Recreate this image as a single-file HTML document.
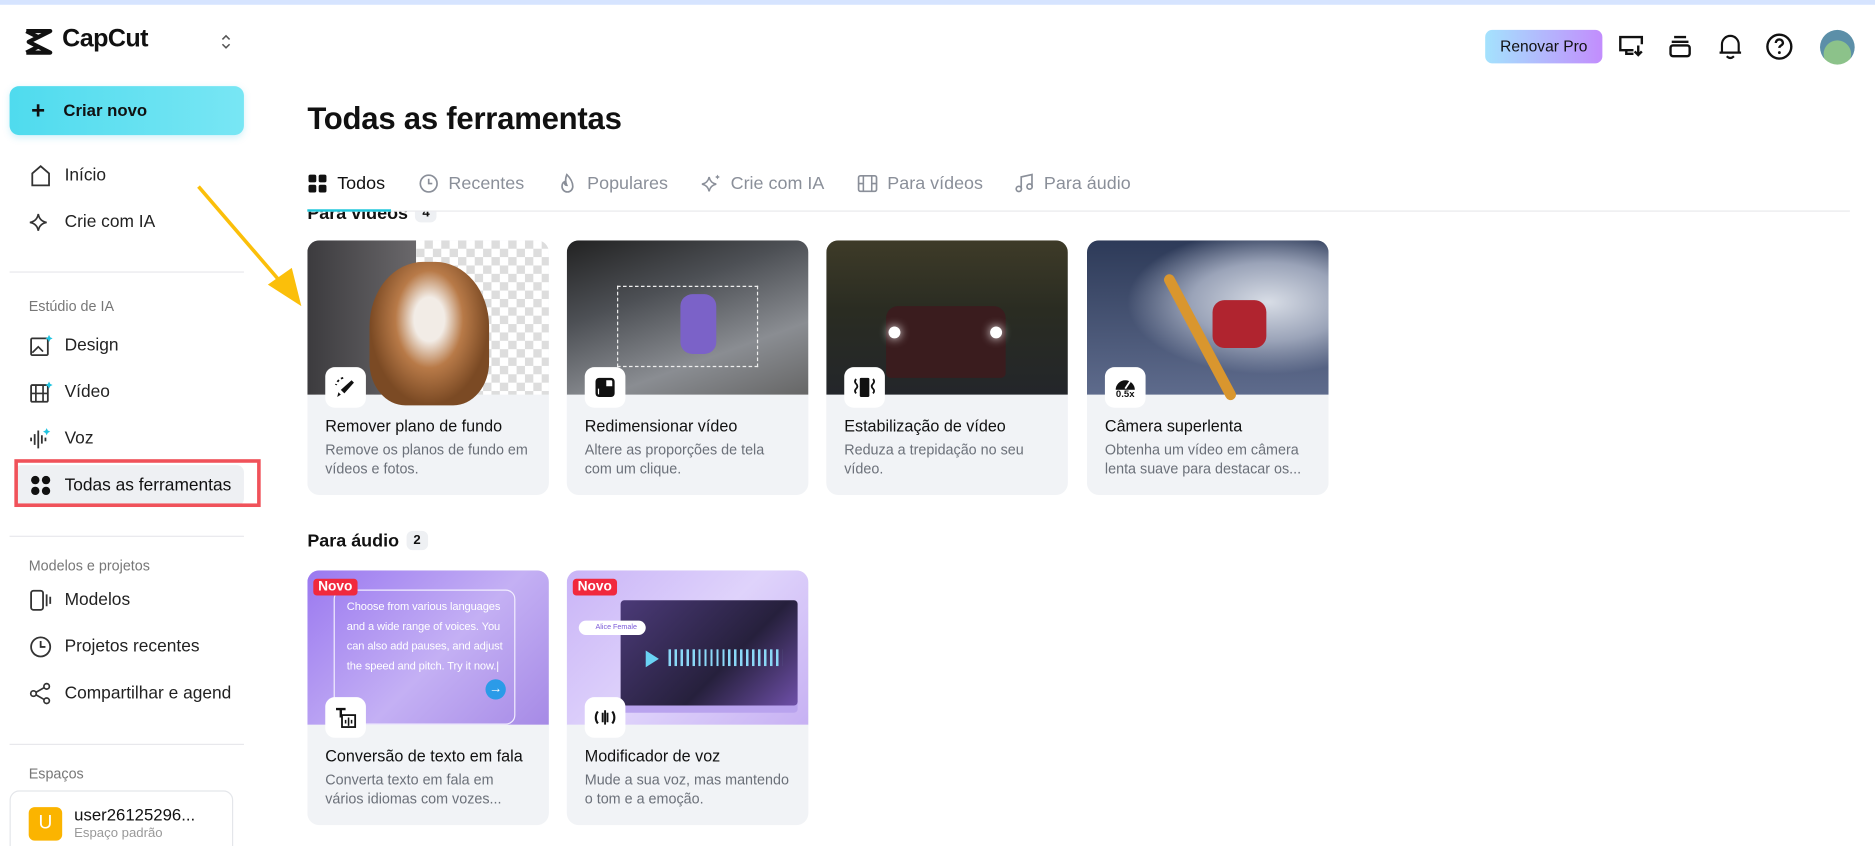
<!DOCTYPE html>
<html><head><meta charset="utf-8"><style>
*{box-sizing:border-box;margin:0;padding:0}
html,body{width:1875px;height:846px;overflow:hidden;background:#fff}
#w{width:1568px;height:708px;transform:scale(1.1958);transform-origin:0 0;position:relative;font-family:"Liberation Sans",sans-serif;color:#111}
.a{position:absolute}
.nav{position:absolute;left:24px;font-size:14.5px;color:#222;display:flex;align-items:center;gap:10px}
.nav svg{width:20px;height:20px}
.sec{position:absolute;left:24px;font-size:12px;color:#777}
.div{position:absolute;left:8px;width:196px;height:1px;background:#e8e8ec}
.tab{position:absolute;top:145px;font-size:15px;color:#8a8f99;display:flex;align-items:center;gap:8px}
.tab svg{width:17px;height:17px}
.card{position:absolute;width:202px;height:213px;background:#f1f3f6;border-radius:10px;overflow:hidden}
.img{position:absolute;left:0;top:0;width:202px;height:129px}
.ic{position:absolute;left:15px;top:106px;width:34px;height:34px;background:#fff;border-radius:8px;display:flex;align-items:center;justify-content:center}
.t{position:absolute;left:15px;top:148px;font-size:13.5px;color:#111}
.d{position:absolute;left:15px;top:168px;font-size:12px;color:#6b7079;line-height:15.5px;width:172px}
.badge{display:inline-block;background:#eef0f3;border-radius:5px;font-size:11px;padding:2px 6px;margin-left:6px;vertical-align:2px;font-weight:bold}
.novo{position:absolute;left:5px;top:7px;background:#f1293d;color:#fff;font-size:11.5px;font-weight:bold;padding:1px 4px;border-radius:3px}
</style></head><body><div id="w">
<div class="a" style="left:0;top:0;width:1568px;height:4px;background:#d6e4ff"></div>
<svg class="a" style="left:20px;top:24px" width="26" height="22" viewBox="0 0 26 22"><path d="M2 2h20l-18 9 18 9H2M2 2l10 5M2 20l10-5" fill="none" stroke="#111" stroke-width="3.5" stroke-linejoin="round"/></svg>
<div class="a" style="left:52px;top:21px;font-size:21px;font-weight:bold;color:#111;letter-spacing:-.5px">CapCut</div>
<svg class="a" style="left:184px;top:27px" width="10" height="16" viewBox="0 0 10 16"><path d="M2 6l3-3 3 3M2 10l3 3 3-3" fill="none" stroke="#555" stroke-width="1.3"/></svg>
<div class="a" style="left:8px;top:72px;width:196px;height:41px;border-radius:8px;background:linear-gradient(90deg,#4fdbee,#78e6f4);box-shadow:0 2px 6px rgba(80,200,230,.25)"></div>
<div class="a" style="left:26px;top:82px;font-size:20px;font-weight:bold">+</div>
<div class="a" style="left:53px;top:84px;font-size:14px;font-weight:bold">Criar novo</div>
<div class="nav" style="top:137px"><svg viewBox="0 0 20 20"><path d="M3 18V8l7-6 7 6v10z" fill="none" stroke="#333" stroke-width="1.5"/></svg>Início</div>
<div class="nav" style="top:176px"><svg viewBox="0 0 20 20"><path d="M8 3q1 6 7 7-6 1-7 7-1-6-7-7 6-1 7-7z" fill="none" stroke="#333" stroke-width="1.4"/></svg>Crie com IA</div>
<div class="div" style="top:227px"></div>
<div class="sec" style="top:249px">Estúdio de IA</div>
<div class="nav" style="top:279px"><svg viewBox="0 0 20 20"><rect x="2" y="4" width="14" height="14" rx="1" fill="none" stroke="#333" stroke-width="1.5"/><path d="M3 16l5-5 4 4" fill="none" stroke="#333" stroke-width="1.4"/><path d="M17 1l1 2 2 1-2 1-1 2-1-2-2-1 2-1z" fill="#20c4e0"/></svg>Design</div>
<div class="nav" style="top:318px"><svg viewBox="0 0 20 20"><rect x="2" y="4" width="14" height="14" rx="1" fill="none" stroke="#333" stroke-width="1.5"/><path d="M6 4v14M12 4v14M2 11h14" stroke="#333" stroke-width="1.4"/><path d="M17 1l1 2 2 1-2 1-1 2-1-2-2-1 2-1z" fill="#20c4e0"/></svg>Vídeo</div>
<div class="nav" style="top:357px"><svg viewBox="0 0 20 20"><path d="M2 9v3M5 6v9M8 3v15M11 7v7M14 9v3" stroke="#333" stroke-width="1.5"/><path d="M15 1l1 2 2 1-2 1-1 2-1-2-2-1 2-1z" fill="#20c4e0"/></svg>Voz</div>
<div class="a" style="left:12px;top:389px;width:192px;height:34px;background:#eef0f3;border-radius:6px"></div>
<div class="a" style="left:12px;top:384px;width:206px;height:40px;border:3px solid #f0525a"></div>
<div class="nav" style="top:396px;color:#111"><svg viewBox="0 0 20 20"><circle cx="5.5" cy="5.5" r="3.5" fill="#111"/><circle cx="14.5" cy="5.5" r="3.5" fill="#111"/><circle cx="5.5" cy="14.5" r="3.5" fill="#111"/><circle cx="14.5" cy="14.5" r="3.5" fill="#111"/></svg>Todas as ferramentas</div>
<div class="div" style="top:448px"></div>
<div class="sec" style="top:466px">Modelos e projetos</div>
<div class="nav" style="top:492px"><svg viewBox="0 0 20 20"><rect x="2" y="2" width="10" height="16" rx="2" fill="none" stroke="#333" stroke-width="1.5"/><path d="M15 5v10M18 7v6" stroke="#333" stroke-width="1.5"/></svg>Modelos</div>
<div class="nav" style="top:531px"><svg viewBox="0 0 20 20"><circle cx="10" cy="10" r="8" fill="none" stroke="#333" stroke-width="1.5"/><path d="M10 5v5h4" fill="none" stroke="#333" stroke-width="1.5"/></svg>Projetos recentes</div>
<div class="nav" style="top:570px"><svg viewBox="0 0 20 20"><circle cx="15" cy="4" r="2.3" fill="none" stroke="#333" stroke-width="1.4"/><circle cx="4" cy="10" r="2.3" fill="none" stroke="#333" stroke-width="1.4"/><circle cx="15" cy="16" r="2.3" fill="none" stroke="#333" stroke-width="1.4"/><path d="M6 9l7-4M6 11l7 4" stroke="#333" stroke-width="1.4"/></svg>Compartilhar e agend</div>
<div class="div" style="top:622px"></div>
<div class="sec" style="top:640px">Espaços</div>
<div class="a" style="left:8px;top:661px;width:187px;height:60px;border:1px solid #e4e6ea;border-radius:8px"></div>
<div class="a" style="left:24px;top:675px;width:28px;height:28px;background:#fbb400;border-radius:5px;color:#fff;font-size:16px;text-align:center;line-height:28px">U</div>
<div class="a" style="left:62px;top:673px;font-size:14px">user26125296...</div>
<div class="a" style="left:62px;top:691px;font-size:11px;color:#999">Espaço padrão</div>
<svg class="a" style="left:160px;top:150px" width="100" height="110" viewBox="0 0 100 110"><path d="M6 6L80 92" stroke="#fbbf0a" stroke-width="3"/><path d="M92 106L64 88 84 74z" fill="#fbbf0a"/></svg>
<div class="a" style="left:1242px;top:25px;width:98px;height:28px;border-radius:6px;background:linear-gradient(90deg,#a4e2fd,#c28dfd);font-size:13px;text-align:center;line-height:28px">Renovar Pro</div>
<svg class="a" style="left:1352px;top:28px" width="24" height="22" viewBox="0 0 24 22"><path d="M14 14H3V3h18v6" fill="none" stroke="#111" stroke-width="2"/><path d="M8 14v3h6M18 10v8M15 15l3 3 3-3" fill="none" stroke="#111" stroke-width="2"/></svg>
<svg class="a" style="left:1394px;top:28px" width="22" height="22" viewBox="0 0 22 22"><path d="M6 3h10M4 7h14" stroke="#111" stroke-width="2"/><rect x="3" y="10" width="16" height="9" rx="2" fill="none" stroke="#111" stroke-width="2"/></svg>
<svg class="a" style="left:1436px;top:27px" width="22" height="24" viewBox="0 0 22 24"><path d="M4 17V10a7 7 0 0114 0v7zM2 17h18M8 20q3 3 6 0" fill="none" stroke="#111" stroke-width="1.8"/></svg>
<svg class="a" style="left:1476px;top:27px" width="24" height="24" viewBox="0 0 24 24"><circle cx="12" cy="12" r="10" fill="none" stroke="#111" stroke-width="2"/><path d="M9 9a3 3 0 116 0c0 2-3 2-3 4" fill="none" stroke="#111" stroke-width="2"/><circle cx="12" cy="17" r="1.2" fill="#111"/></svg>
<div class="a" style="left:1522px;top:25px;width:29px;height:29px;border-radius:50%;background:radial-gradient(circle at 50% 70%,#8cc28a 45%,#5c8fa8 47%)"></div>
<div class="a" style="left:257px;top:84px;font-size:26px;font-weight:bold;letter-spacing:-.2px">Todas as ferramentas</div>
<div class="a" style="left:257px;top:177px;width:1300px;height:531px;overflow:hidden">
 <div class="a" style="left:0;top:-7px;font-size:15px;font-weight:bold">Para vídeos<span class="badge">4</span></div>
 <div class="card" style="left:0;top:24px">
  <div class="img" style="background:linear-gradient(90deg,#3c3b3e,#6a686b 45%,transparent 45%),repeating-conic-gradient(#fff 0 25%,#ddd 0 50%) 0 0/14px 14px"></div>
  <div class="a" style="left:52px;top:18px;width:100px;height:120px;border-radius:45% 45% 30% 30%;background:radial-gradient(ellipse at 50% 40%,#f2ece6 18%,#b87a48 40%,#7b4a24 70%)"></div>
  <div class="ic"><svg width="20" height="20" viewBox="0 0 20 20"><path d="M8 2a8 8 0 00-6 6" fill="none" stroke="#111" stroke-width="1.6" stroke-dasharray="2 2"/><path d="M15 4l2 2-8 9-3-3z" fill="#111"/><path d="M4 14l2 2-3 2z" fill="#111"/></svg></div>
  <div class="t">Remover plano de fundo</div><div class="d">Remove os planos de fundo em vídeos e fotos.</div></div>
 <div class="card" style="left:217px;top:24px">
  <div class="img" style="background:linear-gradient(160deg,#222 0%,#4d5055 35%,#8a8d92 70%,#666 100%)"></div>
  <div class="a" style="left:42px;top:38px;width:118px;height:68px;border:1.5px dashed #eee"></div>
  <div class="a" style="left:95px;top:45px;width:30px;height:50px;background:#7b62c8;border-radius:10px"></div>
  <div class="ic"><svg width="18" height="18" viewBox="0 0 18 18"><rect x="2" y="2" width="14" height="14" rx="2" fill="none" stroke="#111" stroke-width="2"/><rect x="2" y="2" width="8" height="8" fill="#111"/><rect x="4" y="8" width="12" height="8" fill="#111"/></svg></div>
  <div class="t">Redimensionar vídeo</div><div class="d" style="width:165px">Altere as proporções de tela com um clique.</div></div>
 <div class="card" style="left:434px;top:24px">
  <div class="img" style="background:linear-gradient(180deg,#3e3b28 0%,#2a2c22 45%,#23262a 100%)"></div>
  <div class="a" style="left:50px;top:55px;width:100px;height:60px;border-radius:10px 10px 4px 4px;background:#3a1c1e"></div>
  <div class="a" style="left:52px;top:72px;width:10px;height:10px;border-radius:50%;background:#fff;box-shadow:0 0 8px #fff"></div>
  <div class="a" style="left:137px;top:72px;width:10px;height:10px;border-radius:50%;background:#fff;box-shadow:0 0 8px #fff"></div>
  <div class="ic"><svg width="20" height="20" viewBox="0 0 20 20"><rect x="6" y="2" width="8" height="16" rx="1" fill="#111"/><path d="M3 3q-2 2 0 4t0 4 0 4M17 3q2 2 0 4t0 4 0 4" fill="none" stroke="#111" stroke-width="1.5"/></svg></div>
  <div class="t">Estabilização de vídeo</div><div class="d">Reduza a trepidação no seu vídeo.</div></div>
 <div class="card" style="left:652px;top:24px">
  <div class="img" style="background:radial-gradient(ellipse at 75% 40%,#d8dde6 0%,#9aa3b8 30%,transparent 55%),linear-gradient(180deg,#2d3a58,#5e6b8c)"></div>
  <div class="a" style="left:90px;top:22px;width:9px;height:118px;background:#d9962e;transform:rotate(-28deg);border-radius:5px"></div>
  <div class="a" style="left:105px;top:50px;width:45px;height:40px;background:#b0242f;border-radius:10px"></div>
  <div class="ic" style="flex-direction:column"><svg width="18" height="11" viewBox="0 0 18 11"><path d="M1 11a8 8 0 0116 0z" fill="#111"/><path d="M9 10l4-6" stroke="#fff" stroke-width="1.5"/></svg><span style="font-size:8px;font-weight:bold;line-height:8px">0.5x</span></div>
  <div class="t">Câmera superlenta</div><div class="d">Obtenha um vídeo em câmera lenta suave para destacar os...</div></div>

 <div class="a" style="left:0;top:267px;font-size:15px;font-weight:bold">Para áudio<span class="badge">2</span></div>
 <div class="card" style="left:0;top:300px">
  <div class="img" style="background:linear-gradient(135deg,#9a78f0 0%,#c4b0f4 55%,#a68ae6 100%)"></div>
  <div class="a" style="left:22px;top:16px;width:152px;height:113px;border:1.5px solid #f2eeff;border-radius:8px;color:#fff;font-size:9.3px;line-height:16.5px;padding:5px 0 0 10px;letter-spacing:-.1px">Choose from various languages and a wide range of voices. You can also add pauses, and adjust the speed and pitch. Try it now.|</div>
  <div class="a" style="left:149px;top:91px;width:17px;height:17px;border-radius:50%;background:#2b9be8;color:#fff;font-size:11px;text-align:center;line-height:17px">→</div>
  <div class="novo">Novo</div>
  <div class="ic"><svg width="20" height="20" viewBox="0 0 20 20"><path d="M2 3h8M6 3v7" stroke="#111" stroke-width="2"/><rect x="7" y="8" width="11" height="10" fill="none" stroke="#111" stroke-width="1.5"/><path d="M10 12v3M12.5 10v7M15 12v3" stroke="#111" stroke-width="1.3"/></svg></div>
  <div class="t">Conversão de texto em fala</div><div class="d" style="width:162px">Converta texto em fala em vários idiomas com vozes...</div></div>
 <div class="card" style="left:217px;top:300px">
  <div class="img" style="background:linear-gradient(135deg,#c9b4f7,#dfd3fb 50%,#c7b1f3)"></div>
  <div class="a" style="left:45px;top:25px;width:148px;height:88px;background:linear-gradient(135deg,#4b3a78,#26203c 60%,#6e4fa8);border-radius:3px;box-shadow:0 6px 0 #b9a3ee"></div>
  <div class="a" style="left:66px;top:67px;width:0;height:0;border-left:11px solid #6ad3f4;border-top:7px solid transparent;border-bottom:7px solid transparent"></div>
  <div class="a" style="left:85px;top:66px;width:95px;height:14px;background:repeating-linear-gradient(90deg,#8bd8f7 0 2px,transparent 2px 5px)"></div>
  <div class="a" style="left:10px;top:42px;width:56px;height:12px;background:#fff;border-radius:6px;font-size:6px;color:#7b5ad8;line-height:12px;padding-left:14px">Alice Female</div>
  <div class="novo">Novo</div>
  <div class="ic"><svg width="20" height="20" viewBox="0 0 20 20"><path d="M4 5a8 8 0 000 10M16 5a8 8 0 010 10" fill="none" stroke="#111" stroke-width="1.8"/><path d="M8 6v8M10 4v12M12 6v8" stroke="#111" stroke-width="1.6"/></svg></div>
  <div class="t">Modificador de voz</div><div class="d">Mude a sua voz, mas mantendo o tom e a emoção.</div></div>
</div>
<div class="tab" style="left:257px;color:#111"><svg viewBox="0 0 17 17"><rect x="1" y="1" width="6.5" height="6.5" rx="1.5" fill="#111"/><rect x="9.5" y="1" width="6.5" height="6.5" rx="1.5" fill="#111"/><rect x="1" y="9.5" width="6.5" height="6.5" rx="1.5" fill="#111"/><rect x="9.5" y="9.5" width="6.5" height="6.5" rx="1.5" fill="#111"/></svg>Todos</div>
<div class="tab" style="left:350px"><svg viewBox="0 0 17 17"><circle cx="8.5" cy="8.5" r="7" fill="none" stroke="#8a8f99" stroke-width="1.4"/><path d="M8.5 4.5v4h3" fill="none" stroke="#8a8f99" stroke-width="1.4"/></svg>Recentes</div>
<div class="tab" style="left:466px"><svg viewBox="0 0 17 17"><path d="M8 1q5 5 5 10a4.5 4.5 0 01-9 0q0-3 2-4 0 3 2 3-2-4 0-9z" fill="none" stroke="#8a8f99" stroke-width="1.4"/></svg>Populares</div>
<div class="tab" style="left:586px"><svg viewBox="0 0 17 17"><path d="M7 3q1 5 6 6-5 1-6 6-1-5-6-6 5-1 6-6z" fill="none" stroke="#8a8f99" stroke-width="1.3"/><path d="M14 1l.7 1.3L16 3l-1.3.7L14 5l-.7-1.3L12 3l1.3-.7z" fill="#8a8f99"/></svg>Crie com IA</div>
<div class="tab" style="left:717px"><svg viewBox="0 0 17 17"><rect x="1" y="2" width="15" height="13" rx="1.5" fill="none" stroke="#8a8f99" stroke-width="1.4"/><path d="M5 2v13M12 2v13M1 8.5h4M12 8.5h4" stroke="#8a8f99" stroke-width="1.3"/></svg>Para vídeos</div>
<div class="tab" style="left:848px"><svg viewBox="0 0 17 17"><path d="M6 13V3l9-2v10" fill="none" stroke="#8a8f99" stroke-width="1.4"/><circle cx="4" cy="13" r="2.2" fill="none" stroke="#8a8f99" stroke-width="1.4"/><circle cx="13" cy="11" r="2.2" fill="none" stroke="#8a8f99" stroke-width="1.4"/></svg>Para áudio</div>
<div class="a" style="left:257px;top:176px;width:1290px;height:1px;background:#e8e9ec"></div>
<div class="a" style="left:257px;top:175px;width:70px;height:2px;background:#1ec8dc"></div>
</div></body></html>
